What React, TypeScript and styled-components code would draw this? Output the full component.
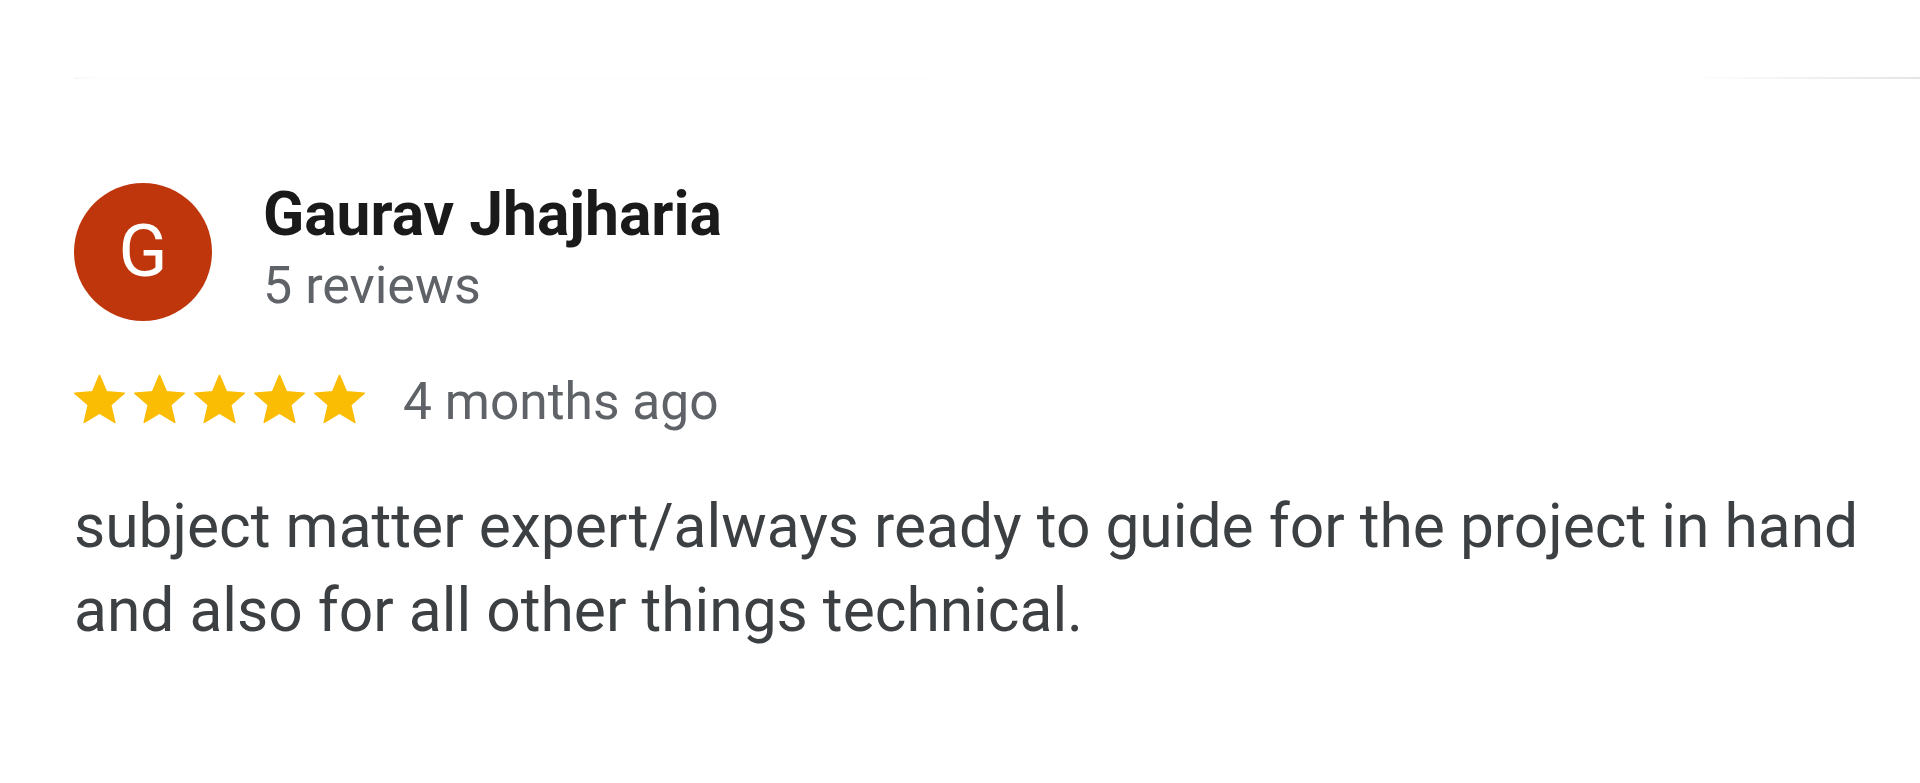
import React from 'react';
import styled, {createGlobalStyle} from "styled-components";

const GlobalStyle = createGlobalStyle`
    html, body {
      margin: 0;
      padding: 0;
      background: #ffffff;
    }

    body {
      font-family: Roboto, "Liberation Sans", Arial, sans-serif;
    }
`;

const Page = styled.div`
    padding: 77px 30px 0 74px;
    min-height: 783px;
    box-sizing: border-box;
`;

// faint edge left over from the card above
const Divider = styled.div`
    height: 2px;
    margin-right: -30px;
    background: linear-gradient(to right, #f6f6f6 0, #fdfdfd 16px, #fefefe 88%, #e4e4e4 100%);
`;

const ReviewHeader = styled.div`
    display: flex;
    align-items: flex-start;
    margin-top: 98px;
`;

const Avatar = styled.div<{ color: string }>`
    flex: none;
    width: 138px;
    height: 138px;
    margin-top: 6px;
    border-radius: 50%;
    background: ${p => p.color};
    color: #ffffff;
    display: flex;
    align-items: center;
    justify-content: center;
    font-size: 72px;
    line-height: 1;
`;

const Author = styled.div`
    display: flex;
    flex-direction: column;
    margin: 3px 0 0 51px;
`;

const Name = styled.div`
    font-size: 60.5px;
    line-height: 70px;
    font-weight: 700;
    color: #1a1a1a;
`;

const Meta = styled.div`
    font-size: 52px;
    line-height: 60px;
    margin-top: 6px;
    color: #5f6368;
`;

const RatingRow = styled.div`
    display: flex;
    align-items: flex-start;
    margin-top: 51px;
`;

const Stars = styled.div`
    display: flex;
    gap: 9px;
    margin-top: 2px;
`;

const Time = styled.span`
    font-size: 51.5px;
    line-height: 60px;
    margin-left: 38px;
    color: #5f6368;
`;

const Body = styled.p`
    margin: 53px 0 0;
    font-size: 60.5px;
    line-height: 84px;
    color: #3c4043;
`;

const Star: React.FC = () => (
    <svg width="51" height="50" viewBox="1.7 1.7 20.6 19.7">
        <path
            d="M12 17.27L18.18 21l-1.64-7.03L22 9.24l-7.19-.61L12 2 9.19 8.63 2 9.24l5.46 4.73L5.82 21z"
            fill="#fbbc04"
            stroke="#fbbc04"
            strokeWidth="0.6"
            strokeLinejoin="round"
        />
    </svg>
);

const review = {
    name: 'Gaurav Jhajharia',
    reviews: 5,
    rating: 5,
    when: '4 months ago',
    text: 'subject matter expert/always ready to guide for the project in hand and also for all other things technical.',
};

const App: React.FC = () => (
    <>
        <GlobalStyle/>
        <Page>
            <Divider/>
            <ReviewHeader>
                <Avatar color="#bf360c">{review.name.charAt(0)}</Avatar>
                <Author>
                    <Name>{review.name}</Name>
                    <Meta>{review.reviews} reviews</Meta>
                </Author>
            </ReviewHeader>
            <RatingRow>
                <Stars>
                    {Array.from({length: review.rating}).map((_, i) => <Star key={i}/>)}
                </Stars>
                <Time>{review.when}</Time>
            </RatingRow>
            <Body>{review.text}</Body>
        </Page>
    </>
);

export default App;
